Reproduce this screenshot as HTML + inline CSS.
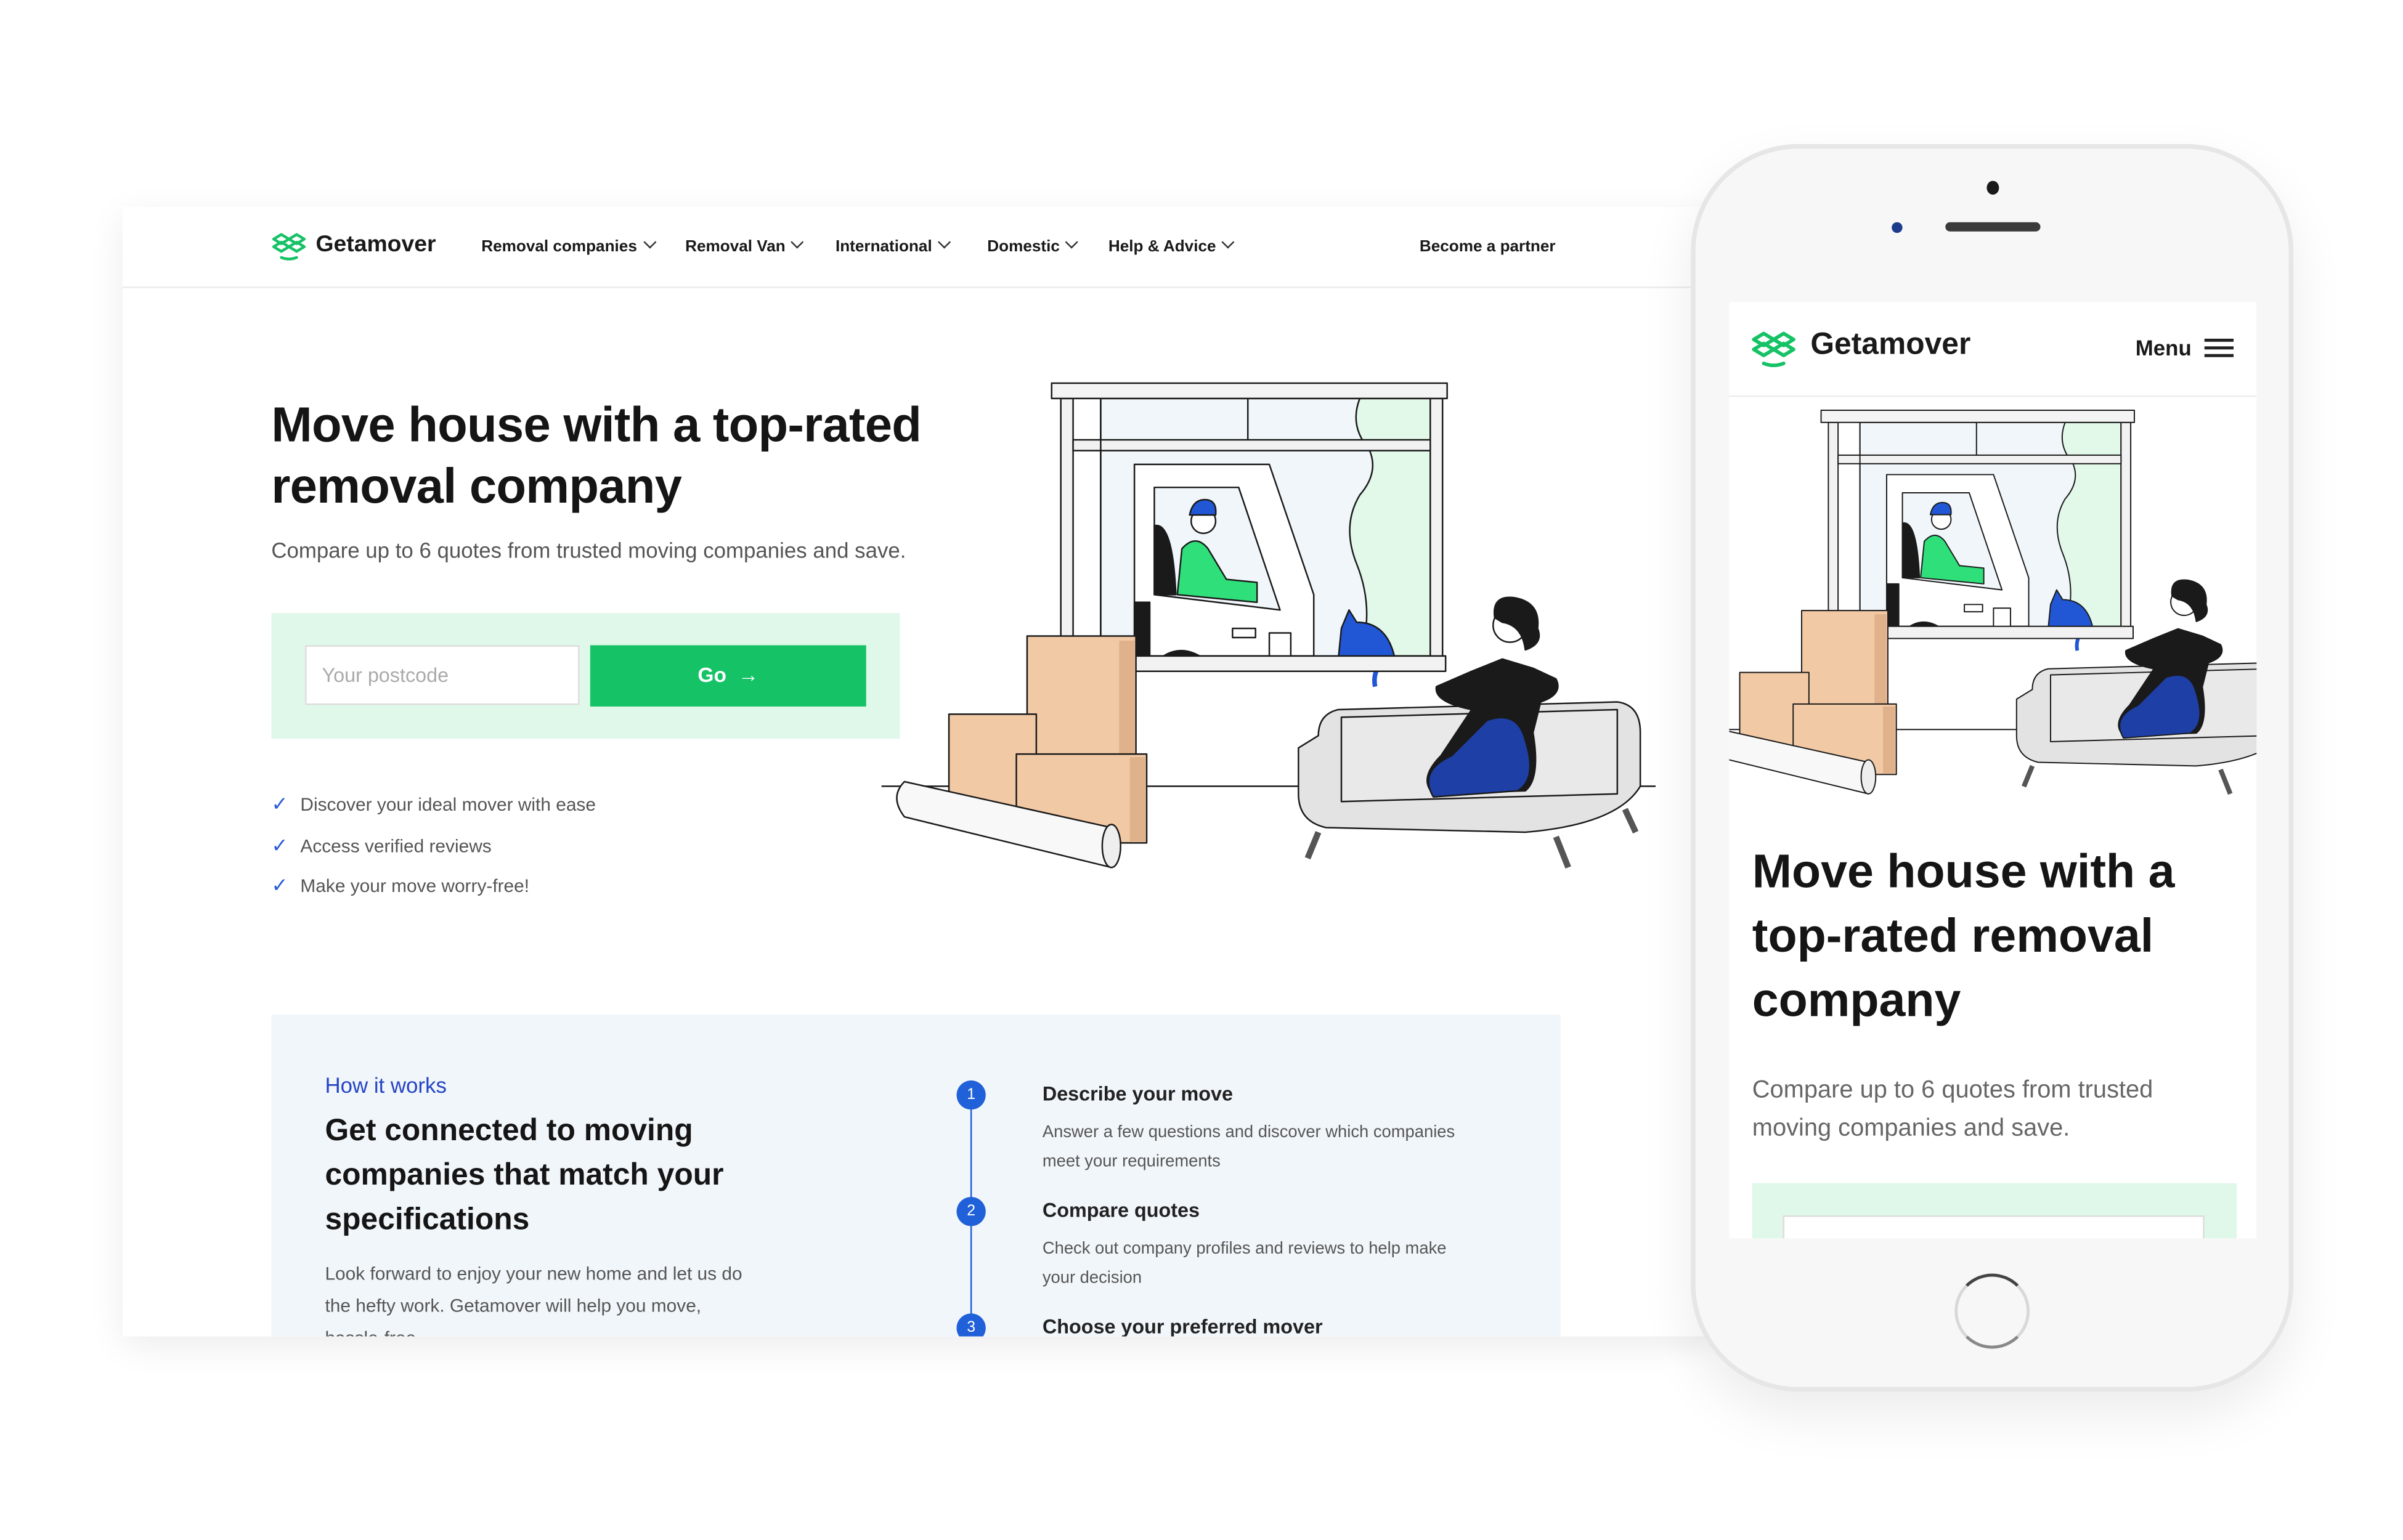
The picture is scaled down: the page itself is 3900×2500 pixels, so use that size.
<!DOCTYPE html>
<html><head><meta charset="utf-8"><style>
*{margin:0;padding:0;box-sizing:border-box}
html,body{width:3900px;height:2500px;background:#fff;overflow:hidden;font-family:"Liberation Sans",sans-serif}
#s{position:absolute;left:0;top:0;width:1568px;height:1005px;transform:scale(2.488);transform-origin:0 0}
.a{position:absolute;white-space:nowrap}
.card{position:absolute;left:80px;top:135px;width:1040px;height:737px;background:#fff;box-shadow:0 6px 22px rgba(0,0,0,.08);overflow:hidden}
.nav{font-size:10.5px;font-weight:bold;color:#1a1a1a}
.chev{display:inline-block;width:6px;height:6px;border-right:1px solid #333;border-bottom:1px solid #333;transform:rotate(45deg);margin-left:5px;position:relative;top:-3px}
.chk{color:#2a5bd7;font-size:13px;margin-right:8px}
.li{font-size:12px;color:#555}
</style></head><body><div id="s">

<svg width="0" height="0" style="position:absolute"><defs>
<g id="logo" fill="none" stroke="#16c266" stroke-width="1.8" stroke-linejoin="round">
<path d="M1 5 L6 2 L11 5 L6 8 Z"/><path d="M11 5 L16 2 L21 5 L16 8 Z"/>
<path d="M1 10 L6 7 L11 10 L6 13 Z"/><path d="M11 10 L16 7 L21 10 L16 13 Z"/>
<path d="M6 17 Q11 19 16 17" stroke-linecap="round"/>
</g>
<g id="ill" stroke="#1a1a1a" stroke-width="1" stroke-linejoin="round">
<line x1="0" y1="265" x2="505" y2="265"/>
<rect x="143" y="12" width="215" height="170" fill="#f1f6fa"/>
<path d="M312 12 Q305 30 318 45 Q325 60 312 75 Q300 95 310 120 Q322 150 312 180 L358 180 L358 12 Z" fill="#e2f8e8"/>
<rect x="117" y="12" width="8" height="172" fill="#f2f2f2"/>
<rect x="358" y="12" width="8" height="172" fill="#f2f2f2"/>
<rect x="111" y="2" width="258" height="10" fill="#f4f4f4"/>
<rect x="125" y="39" width="233" height="7" fill="#f2f2f2"/>
<line x1="143" y1="12" x2="143" y2="180"/><line x1="239" y1="12" x2="239" y2="39"/>
<path d="M165 180 L165 55 L253 55 L282 140 L282 180 Z" fill="#fff"/>
<rect x="165" y="145" width="10" height="35" fill="#1a1a1a"/>
<path d="M178 70 L233 70 L260 150 L178 140 Z" fill="#f1f6fa"/>
<path d="M178 95 Q190 92 192 140 L178 140 Z" fill="#1a1a1a"/>
<path d="M193 140 L196 110 Q205 100 213 110 L225 130 L245 132 L245 145 Z" fill="#2fe07a"/>
<circle cx="210" cy="92" r="8" fill="#fff"/><path d="M201 88 Q203 78 211 78 Q219 78 218 88 Z" fill="#2156d4"/>
<path d="M229 162 L244 162 L244 168 L229 168 Z" fill="#fff"/>
<path d="M180 183 Q195 170 212 183 Z" fill="#1a1a1a"/>
<rect x="253" y="165" width="14" height="17" fill="#fff"/>
<path d="M298 182 L300 162 L305 150 L310 158 Q330 158 335 182 Z" fill="#2156d4"/>
<path d="M328 182 Q320 190 322 200" fill="none" stroke="#2156d4" stroke-width="3"/>
<rect x="165" y="180" width="203" height="10" fill="#f2f2f2"/>
<rect x="95" y="167" width="71" height="102" fill="#f2c9a5"/><rect x="155" y="170" width="10" height="98" fill="#e0b28b" stroke="none"/>
<rect x="44" y="218" width="57" height="67" fill="#f2c9a5"/>
<rect x="88" y="244" width="85" height="58" fill="#f2c9a5"/><rect x="162" y="246" width="10" height="55" fill="#e0b28b" stroke="none"/>
<path d="M15 262 L150 292 Q160 305 150 318 L15 285 Q5 272 15 262 Z" fill="#f8f8f8"/>
<ellipse cx="150" cy="304" rx="6" ry="14" fill="#eee"/>
<path d="M285 232 Q285 218 298 215 L480 210 Q495 212 495 230 L495 265 Q480 290 420 295 L290 292 Q272 288 272 270 L272 240 Z" fill="#e3e3e3"/>
<path d="M300 275 L300 220 L480 215 L480 270 Z" fill="#e9e9e9"/>
<path d="M285 295 L278 312" stroke="#555" stroke-width="4"/><path d="M440 298 L448 318" stroke="#555" stroke-width="4"/><path d="M485 280 L492 295" stroke="#555" stroke-width="4"/>
<path d="M385 190 L405 182 L425 188 L440 195 Q445 205 430 210 L425 230 Q430 260 420 268 L360 270 Q350 260 365 245 L385 215 Q360 210 362 200 Z" fill="#1a1a1a"/>
<path d="M360 272 Q350 255 372 245 L395 222 Q415 215 420 235 Q428 260 415 268 Z" fill="#1e3fa6"/>
<circle cx="410" cy="160" r="11" fill="#fff"/>
<path d="M400 155 Q398 140 413 142 Q430 145 428 162 Q432 172 420 176 Q418 160 405 158 Z" fill="#1a1a1a"/>
</g>
</defs></svg>

<div class="card">
 <div style="position:absolute;left:0;top:52px;width:1040px;border-top:1px solid #ececec"></div>
</div>
<svg class="a" style="left:177px;top:151px" width="23" height="20" viewBox="0 0 22 20"><use href="#logo"/></svg>
<div class="a" style="left:206px;top:151px;font-size:15px;font-weight:bold;color:#1a1a1a">Getamover</div>
<div class="a nav" style="left:314px;top:155px">Removal companies<span class="chev"></span></div>
<div class="a nav" style="left:447px;top:155px">Removal Van<span class="chev"></span></div>
<div class="a nav" style="left:545px;top:155px">International<span class="chev"></span></div>
<div class="a nav" style="left:644px;top:155px">Domestic<span class="chev"></span></div>
<div class="a nav" style="left:723px;top:155px">Help &amp; Advice<span class="chev"></span></div>
<div class="a nav" style="left:926px;top:155px">Become a partner</div>

<div class="a" style="left:177px;top:257px;font-size:32px;font-weight:bold;line-height:40px;color:#151515;letter-spacing:-.3px">Move house with a top-rated<br>removal company</div>
<div class="a" style="left:177px;top:351px;font-size:14px;color:#555">Compare up to 6 quotes from trusted moving companies and save.</div>
<div class="a" style="left:177px;top:400px;width:410px;height:82px;background:#e0f8e9"></div>
<div class="a" style="left:199px;top:421px;width:179px;height:39px;background:#fff;border:1px solid #ddd;font-size:13px;color:#aaa;padding:11px 10px">Your postcode</div>
<div class="a" style="left:385px;top:421px;width:180px;height:40px;background:#15c266;color:#fff;font-size:13.5px;font-weight:bold;text-align:center;line-height:40px">Go &nbsp;→</div>
<div class="a li" style="left:177px;top:517px"><span class="chk">✓</span>Discover your ideal mover with ease</div>
<div class="a li" style="left:177px;top:544px"><span class="chk">✓</span>Access verified reviews</div>
<div class="a li" style="left:177px;top:570px"><span class="chk">✓</span>Make your move worry-free!</div>

<svg class="a" style="left:575px;top:248px" width="505" height="322" viewBox="0 0 505 322"><use href="#ill"/></svg>

<div class="a" style="left:177px;top:662px;width:841px;height:210px;background:#f1f6fa;overflow:hidden">
 <div class="a" style="left:35px;top:38px;font-size:14px;color:#2444c4">How it works</div>
 <div class="a" style="left:35px;top:62px;font-size:20px;font-weight:bold;line-height:29px;color:#151515">Get connected to moving<br>companies that match your<br>specifications</div>
 <div class="a" style="left:35px;top:159px;font-size:12px;line-height:21px;color:#555">Look forward to enjoy your new home and let us do<br>the hefty work. Getamover will help you move,<br>hassle-free.</div>
 <div class="a" style="left:456px;top:52px;width:1px;height:160px;background:#2060d8"></div>
 <div class="a" style="left:447px;top:43px;width:19px;height:19px;border-radius:50%;background:#2060d8;color:#fff;font-size:10px;text-align:center;line-height:19px">1</div>
 <div class="a" style="left:447px;top:119px;width:19px;height:19px;border-radius:50%;background:#2060d8;color:#fff;font-size:10px;text-align:center;line-height:19px">2</div>
 <div class="a" style="left:447px;top:195px;width:19px;height:19px;border-radius:50%;background:#2060d8;color:#fff;font-size:10px;text-align:center;line-height:19px">3</div>
 <div class="a" style="left:503px;top:44px;font-size:13px;font-weight:bold;color:#222">Describe your move</div>
 <div class="a" style="left:503px;top:68px;font-size:11px;line-height:19px;color:#555">Answer a few questions and discover which companies<br>meet your requirements</div>
 <div class="a" style="left:503px;top:120px;font-size:13px;font-weight:bold;color:#222">Compare quotes</div>
 <div class="a" style="left:503px;top:144px;font-size:11px;line-height:19px;color:#555">Check out company profiles and reviews to help make<br>your decision</div>
 <div class="a" style="left:503px;top:196px;font-size:13px;font-weight:bold;color:#222">Choose your preferred mover</div>
</div>

<!-- phone -->
<div class="a" style="left:1103px;top:94px;width:393px;height:814px;border-radius:70px;background:#f7f7f7;border:3px solid #e6e6e6;box-shadow:0 15px 35px rgba(0,0,0,.08)"></div>
<div class="a" style="left:1296px;top:118px;width:8px;height:9px;border-radius:50%;background:#1a1a1a"></div>
<div class="a" style="left:1269px;top:145px;width:62px;height:6px;border-radius:3px;background:#3a3a3a"></div>
<div class="a" style="left:1234px;top:145px;width:7px;height:7px;border-radius:50%;background:#1e3a8a"></div>
<div class="a" style="left:1275px;top:831px;width:49px;height:49px;border-radius:50%;border:2px solid #d8d8d8;border-top-color:#444;border-bottom-color:#888"></div>
<div class="a" style="left:1128px;top:197px;width:344px;height:611px;background:#fff;overflow:hidden">
 <div class="a" style="left:0;top:61px;width:344px;border-top:1px solid #ececec"></div>
 <svg class="a" style="left:14px;top:18px" width="30" height="26" viewBox="0 0 22 20"><use href="#logo"/></svg>
 <div class="a" style="left:53px;top:17px;font-size:20px;font-weight:bold;color:#1a1a1a">Getamover</div>
 <div class="a" style="left:265px;top:22px;font-size:14px;font-weight:bold;color:#1a1a1a">Menu</div>
 <div class="a" style="left:310px;top:24px;width:19px;height:2px;background:#222;box-shadow:0 5px 0 #222,0 10px 0 #222"></div>
 <svg class="a" style="left:-28px;top:69px" width="400" height="260" viewBox="0 0 505 328"><use href="#ill"/></svg>
 <div class="a" style="left:15px;top:351px;font-size:31px;font-weight:bold;line-height:42px;color:#151515">Move house with a<br>top-rated removal<br>company</div>
 <div class="a" style="left:15px;top:502px;font-size:16px;line-height:25px;color:#666">Compare up to 6 quotes from trusted<br>moving companies and save.</div>
 <div class="a" style="left:15px;top:575px;width:316px;height:50px;background:#e0f8e9"></div>
 <div class="a" style="left:35px;top:596px;width:275px;height:30px;background:#fff;border:1px solid #ddd"></div>
</div>
</div></body></html>
